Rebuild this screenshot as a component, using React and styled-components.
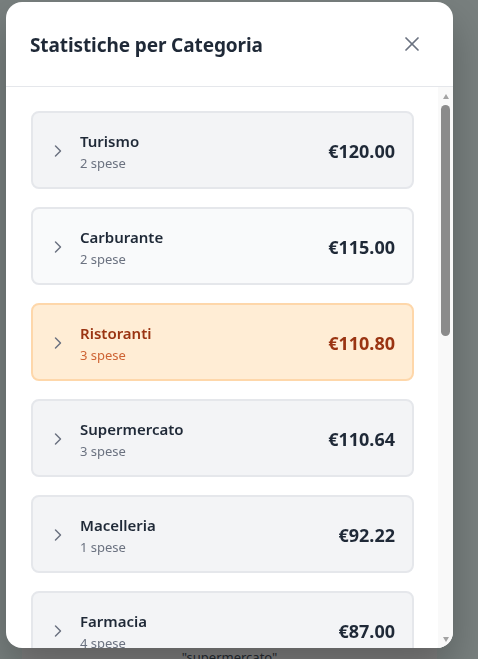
import React from 'react'
import styled, { createGlobalStyle } from 'styled-components'
import { X, ChevronRight } from 'lucide-react'

const GlobalStyle = createGlobalStyle`
    html, body {
        margin: 0;
        padding: 0;
        height: 100%;
        overflow: hidden;
    }

    body {
        font-family: "Noto Sans", "Open Sans", sans-serif;
        background: #f0fefc;
        color: #1f2937;
    }
`

const Page = styled.div`
    height: 100vh;
    display: flex;
    flex-direction: column;
    justify-content: flex-end;
    padding: 0 41px 0 22px;
    overflow: hidden;
`

const HintCard = styled.div`
    background: #ffffff;
    border-radius: 12px 12px 0 0;
    padding: 0 40px;
    margin-bottom: -20px;
    text-align: center;
    font-size: 13px;
    line-height: 18px;
    color: #4b5563;
`

const Overlay = styled.div`
    position: fixed;
    inset: 0;
    background: rgba(0, 0, 0, 0.5);
    padding: 2px 0 0 6px;
`

const Modal = styled.div`
    width: 447px;
    height: 646px;
    background: #ffffff;
    border-radius: 16px;
    overflow: hidden;
    display: flex;
    flex-direction: column;
    box-shadow: 0 20px 40px rgba(0, 0, 0, 0.25);
`

const Header = styled.header`
    flex: none;
    height: 84px;
    display: flex;
    align-items: center;
    justify-content: space-between;
    padding: 0 29px 0 24px;
    border-bottom: 1px solid #e5e7eb;
`

const Title = styled.h2`
    margin: 0;
    font-size: 19px;
    line-height: 28px;
    padding-top: 2px;
    font-weight: 700;
    color: #1f2937;
    letter-spacing: -0.1px;
`

const CloseButton = styled.button`
    border: none;
    background: none;
    padding: 0;
    display: flex;
    color: #6b7280;
    cursor: pointer;
`

const Body = styled.div`
    flex: 1;
    min-height: 0;
    display: flex;
`

const List = styled.div`
    flex: 1;
    overflow: hidden;
    padding: 24px 24px 24px 25px;
    display: flex;
    flex-direction: column;
    gap: 18px;
`

/* classic scrollbar, drawn since the headless browser hides the native one */
const ScrollTrack = styled.div`
    flex: none;
    width: 15px;
    background: #f9f9f9;
    display: flex;
    flex-direction: column;
    align-items: center;
`

const ScrollArrow = styled.span`
    flex: none;
    height: 16px;
    display: flex;
    align-items: center;
    justify-content: center;

    &::before {
        content: "";
        border-left: 3.5px solid transparent;
        border-right: 3.5px solid transparent;
        ${p => p.$dir === 'up'
            ? 'border-bottom: 5px solid #a3a3a3; margin-top: 2px;'
            : 'border-top: 5px solid #a3a3a3; margin-bottom: 2px;'}
    }
`

const ScrollThumb = styled.span`
    flex: none;
    width: 9px;
    height: 231px;
    margin-top: 2px;
    border-radius: 5px;
    background: #8b8b8b;
`

const ScrollRest = styled.span`
    flex: 1;
`

const tones = {
    base: { bg: '#f3f4f6', border: '#e5e7eb', name: '#1f2937', sub: '#6b7280', amount: '#1f2937' },
    light: { bg: '#f9fafb', border: '#e5e7eb', name: '#1f2937', sub: '#6b7280', amount: '#1f2937' },
    active: { bg: '#ffedd5', border: '#fed7aa', name: '#9a3412', sub: '#c2410c', amount: '#9a3412' },
}

const Card = styled.div`
    flex: none;
    display: flex;
    align-items: center;
    padding: 17px 17px 15px 15px;
    border: 2px solid ${p => tones[p.$tone].border};
    border-radius: 8px;
    background: ${p => tones[p.$tone].bg};
`

const Chevron = styled.span`
    display: flex;
    color: #6b7280;
    margin-right: 12px;
`

const Info = styled.div`
    flex: 1;
    display: flex;
    flex-direction: column;
`

const Name = styled.span`
    font-size: 15px;
    line-height: 22px;
    font-weight: 600;
    color: ${p => tones[p.$tone].name};
`

const Count = styled.span`
    margin-top: 2px;
    font-size: 13px;
    line-height: 18px;
    color: ${p => tones[p.$tone].sub};
    opacity: ${p => p.$tone === 'active' ? 0.8 : 1};
`

const Amount = styled.span`
    font-size: 18px;
    font-weight: 700;
    color: ${p => tones[p.$tone].amount};
`

const categories = [
    { name: 'Turismo', count: 2, total: 120.0 },
    { name: 'Carburante', count: 2, total: 115.0, tone: 'light' },
    { name: 'Ristoranti', count: 3, total: 110.8, tone: 'active' },
    { name: 'Supermercato', count: 3, total: 110.64 },
    { name: 'Macelleria', count: 1, total: 92.22 },
    { name: 'Farmacia', count: 4, total: 87.0 },
    { name: 'Abbigliamento', count: 2, total: 65.4 },
    { name: 'Bar', count: 5, total: 42.3 },
]

export default function App () {
    return (
        <>
            <GlobalStyle />
            <Page>
                <HintCard>
                    <p>Prova a cercare parole come "viaggi" oppure<br />"supermercato"</p>
                </HintCard>
            </Page>
            <Overlay>
                <Modal>
                    <Header>
                        <Title>Statistiche per Categoria</Title>
                        <CloseButton aria-label="Chiudi">
                            <X size={24} strokeWidth={1.75} />
                        </CloseButton>
                    </Header>
                    <Body>
                        <List>
                            {categories.map(c => {
                                const tone = c.tone || 'base'
                                return (
                                    <Card key={c.name} $tone={tone}>
                                        <Chevron>
                                            <ChevronRight size={20} strokeWidth={1.75} />
                                        </Chevron>
                                        <Info>
                                            <Name $tone={tone}>{c.name}</Name>
                                            <Count $tone={tone}>{c.count} spese</Count>
                                        </Info>
                                        <Amount $tone={tone}>€{c.total.toFixed(2)}</Amount>
                                    </Card>
                                )
                            })}
                        </List>
                        <ScrollTrack>
                            <ScrollArrow $dir="up" />
                            <ScrollThumb />
                            <ScrollRest />
                            <ScrollArrow $dir="down" />
                        </ScrollTrack>
                    </Body>
                </Modal>
            </Overlay>
        </>
    )
}
